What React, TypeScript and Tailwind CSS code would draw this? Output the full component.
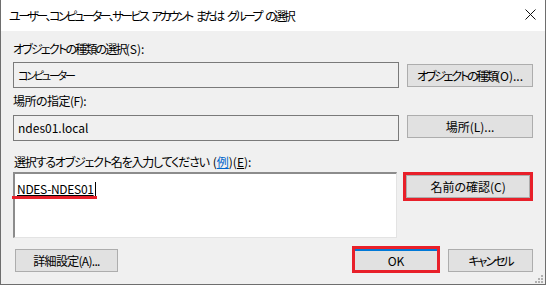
import React from "react";

const font = "[font-family:'Noto_Sans_CJK_JP','Noto_Sans',sans-serif] [font-feature-settings:'palt']";

function Btn({ label, className = "" }: { label: React.ReactNode; className?: string }) {
  return (
    <div
      className={`flex items-center justify-center whitespace-nowrap bg-[#e1e1e1] border border-[#adadad] text-[12px] text-black ${className}`}
    >
      {label}
    </div>
  );
}

const titleWords = ["ユーザー、コンピューター、サービス", "アカウント", "または", "グループ", "の選択"];

export default function App() {
  return (
    <div
      className={`relative w-[546px] h-[285px] bg-[#f0f0f0] border-x border-b border-[#6e6e6e] overflow-hidden ${font} text-[12px] leading-[16px] text-[#000]`}
    >
      {/* title bar */}
      <div className="flex items-center justify-between h-[31px] bg-white pl-[8px] pr-[9px]">
        <div className="flex gap-[4px] whitespace-nowrap text-[12px] text-black">
          {titleWords.map((w) => (
            <span key={w} className="tracking-[-2.5px]">
              {w}
            </span>
          ))}
        </div>
        <svg width="11" height="11" viewBox="0 0 11 11" className="mb-[2px]">
          <path d="M0.5 0.5 L10.5 10.5 M10.5 0.5 L0.5 10.5" stroke="#111" strokeWidth="1" />
        </svg>
      </div>

      <div className="pl-[12px] pr-[12px]">
        {/* object type */}
        <div className="mt-[10px] whitespace-nowrap">
          <span className="tracking-[-1.8px]">オブジェクトの種類の選択</span>(S):
        </div>
        <div className="flex mt-[5px]">
          <div className="w-[386px] h-[26px] border border-[#7a7a7a] flex items-center pl-[4px] text-[11px] tracking-[-2.2px]">
            コンピューター
          </div>
          <Btn
            label={
              <span>
                <span className="tracking-[-2.2px]">オブジェクトの種類</span>(O)...
              </span>
            }
            className="w-[126px] h-[23px] ml-[8px] mt-[2px]"
          />
        </div>

        {/* location */}
        <div className="mt-[5px] tracking-[-0.5px]">場所の指定(F):</div>
        <div className="flex mt-[6px]">
          <div className="w-[386px] h-[26px] border border-[#7a7a7a] flex items-center pl-[4px]">
            ndes01.local
          </div>
          <Btn label="場所(L)..." className="w-[126px] h-[23px] ml-[8px]" />
        </div>

        {/* object name */}
        <div className="mt-[13px] pl-[1px] whitespace-nowrap">
          <span className="tracking-[-1.2px]">選択するオブジェクト名を入力してください</span>
          <span className="ml-[4px]">
            (<span className="text-[#0066cc] underline">例</span>)(<span className="underline">E</span>):
          </span>
        </div>
        <div className="flex mt-[2px]">
          <div className="relative w-[385px] h-[66px] bg-white border-l-2 border-t-2 border-[#8c8c8c] border-r border-b border-r-[#e3e3e3] border-b-[#e3e3e3]">
            <div className="flex items-center mt-[7px] ml-[2px]">
              <span className="underline leading-[16px] tracking-[-0.3px]">NDES-NDES01</span>
              <span className="w-[1px] h-[14px] bg-black ml-[1px]" />
            </div>
            <div className="absolute left-[-3px] top-[22px] w-[85px] h-[3px] bg-[#e8202a]" />
          </div>
          <div className="ml-[6px] w-[130px] h-[29px] border-[3px] border-[#e8202a]">
            <Btn label="名前の確認(C)" className="w-full h-full" />
          </div>
        </div>

        {/* bottom buttons */}
        <div className="flex items-start mt-[8px]">
          <Btn
            label={<span className="tracking-[-0.7px]">詳細設定(A)...</span>}
            className="w-[103px] h-[23px] ml-[2px] mt-[3px]"
          />
          <div className="ml-auto w-[88px] h-[27px] border-[3px] border-[#e8202a]">
            <Btn label="OK" className="w-full h-full border-0 border-t-2 border-t-[#0078d7]" />
          </div>
          <Btn
            label={<span className="tracking-[-2px]">キャンセル</span>}
            className="w-[85px] h-[23px] ml-[8px] mt-[3px]"
          />
        </div>
      </div>

      {/* resize grip */}
      <svg width="9" height="9" viewBox="0 0 9 9" className="absolute right-[2px] bottom-[1px]">
        {[
          [7, 1],
          [4, 4],
          [7, 4],
          [1, 7],
          [4, 7],
          [7, 7],
        ].map(([x, y], i) => (
          <rect key={i} x={x} y={y} width="2" height="2" fill="#b0b0b0" />
        ))}
      </svg>
    </div>
  );
}
